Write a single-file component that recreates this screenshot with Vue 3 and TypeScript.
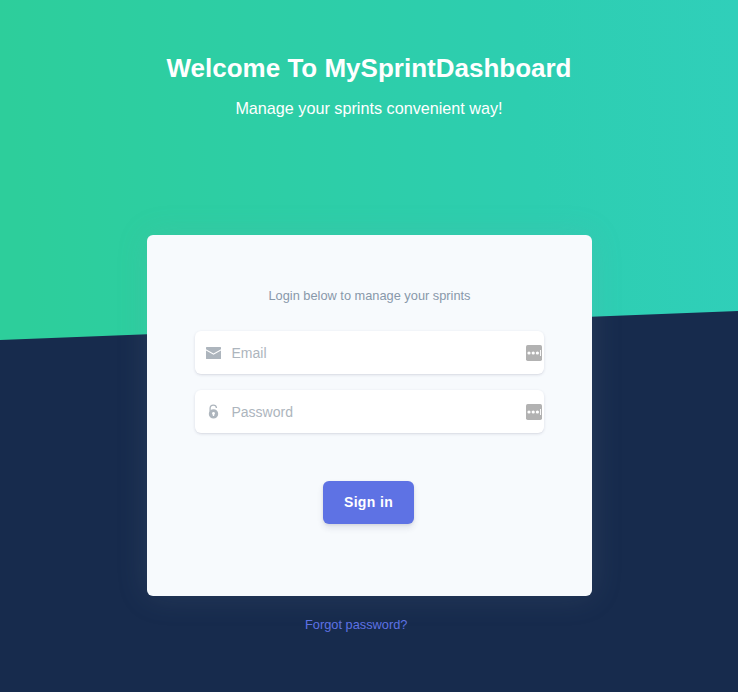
<script setup lang="ts">
import { ref } from 'vue'

const email = ref('')
const password = ref('')
</script>

<template>
  <div class="page">
    <svg class="backdrop" viewBox="0 0 738 342" preserveAspectRatio="none" aria-hidden="true">
      <defs>
        <linearGradient id="hero" x1="0" y1="0.04" x2="1" y2="0">
          <stop offset="0" stop-color="#2dce9b" />
          <stop offset="0.7" stop-color="#2dceb0" />
          <stop offset="1" stop-color="#30cfba" />
        </linearGradient>
      </defs>
      <path d="M0 0H738V311L0 340Z" fill="url(#hero)" />
    </svg>
    <header class="hero">
      <h1>Welcome To MySprintDashboard</h1>
      <p>Manage your sprints convenient way!</p>
    </header>
    <main class="wrap">
      <form class="card" @submit.prevent>
        <p class="hint">Login below to manage your sprints</p>
        <label class="field">
          <svg class="lead" width="15" height="15" viewBox="0 0 15 15">
            <path d="M.5 2H14.5Q15 2 15 2.5V4.3L7.5 8.5L0 4.3V2.5Q0 2 .5 2Z" />
            <path d="M0 5.4L7.5 9.7L15 5.4V13.5Q15 14 14.5 14H.5Q0 14 0 13.5Z" />
          </svg>
          <input v-model="email" type="email" placeholder="Email" />
          <svg class="manager" width="16" height="16" viewBox="0 0 16 16">
            <rect width="16" height="16" rx="1.7" fill="#b2b2b2" />
            <g fill="#fff"><circle cx="3" cy="8" r="1.6" /><circle cx="7.2" cy="8" r="1.6" /><circle cx="11.4" cy="8" r="1.6" /><rect x="14" y="5" width="0.9" height="6" /></g>
          </svg>
        </label>
        <label class="field">
          <svg class="lead" width="15" height="15" viewBox="0 0 15 15">
            <path d="M4.1 7.5V4.2Q4.1 1.2 7.3 1.2Q10.2 1.2 10.5 4" fill="none" stroke="#adb5bd" stroke-width="1.3" />
            <path fill-rule="evenodd" d="M7.5 5.2A4.7 4.7 0 1 1 7.5 14.6A4.7 4.7 0 0 1 7.5 5.2ZM7.5 7.9A1.5 1.5 0 0 0 6.8 10.7V12H8.2V10.7A1.5 1.5 0 0 0 7.5 7.9Z" />
          </svg>
          <input v-model="password" type="password" placeholder="Password" />
          <svg class="manager" width="16" height="16" viewBox="0 0 16 16">
            <rect width="16" height="16" rx="1.7" fill="#b2b2b2" />
            <g fill="#fff"><circle cx="3" cy="8" r="1.6" /><circle cx="7.2" cy="8" r="1.6" /><circle cx="11.4" cy="8" r="1.6" /><rect x="14" y="5" width="0.9" height="6" /></g>
          </svg>
        </label>
        <button type="submit">Sign in</button>
      </form>
      <a class="forgot" href="#">Forgot password?</a>
    </main>
  </div>
</template>

<style>
body {
  margin: 0;
  background: #172b4d;
}
</style>

<style scoped>
.page {
  position: relative;
  box-sizing: border-box;
  min-height: 692px;
  overflow: hidden;
  background: #172b4d;
  font-family: "Liberation Sans", Arial, sans-serif;
}
.backdrop {
  position: absolute;
  top: 0;
  left: 0;
  width: 100%;
  height: 342px;
}
.hero {
  position: relative;
  box-sizing: border-box;
  height: 235px;
  padding-top: 49px;
  text-align: center;
  color: #fff;
}
h1 {
  margin: 0;
  font-size: 26px;
  line-height: 39px;
  font-weight: 700;
}
.hero p {
  margin: 7px 0 0;
  font-size: 16.2px;
  line-height: 27px;
}
.wrap {
  position: relative;
  width: 445px;
  margin: 0 auto 0 147px;
}
.card {
  box-sizing: border-box;
  display: flex;
  flex-direction: column;
  height: 361px;
  padding: 51px 48px 0;
  border-radius: 6px;
  background: #f7fafd;
  box-shadow: 0 0 32px rgba(136, 152, 170, 0.15);
}
.hint {
  margin: 0 0 25px;
  text-align: center;
  font-size: 12.8px;
  line-height: 20px;
  color: #8898aa;
}
.field {
  box-sizing: border-box;
  display: flex;
  align-items: center;
  height: 43px;
  margin-bottom: 16px;
  padding: 0 2px 0 11px;
  border-radius: 6px;
  background: #fff;
  box-shadow: 0 1px 3px rgba(50, 50, 93, 0.15), 0 1px 0 rgba(0, 0, 0, 0.02);
}
.lead {
  flex: none;
  fill: #adb5bd;
}
.manager {
  flex: none;
}
input {
  flex: 1;
  min-width: 0;
  padding: 0 0 0 10.5px;
  border: 0;
  outline: 0;
  background: transparent;
  font: 14px/20px "Liberation Sans", Arial, sans-serif;
  color: #8898aa;
}
input::placeholder {
  color: #adb5bd;
  opacity: 1;
}
button {
  align-self: center;
  width: 91px;
  height: 43px;
  margin: 32px 2px 0 0;
  padding: 0 0 2px;
  border: 0;
  border-radius: 6px;
  background: #5e72e4;
  box-shadow: 0 4px 6px rgba(50, 50, 93, 0.11), 0 1px 3px rgba(0, 0, 0, 0.08);
  font: 700 14px/20px "Liberation Sans", Arial, sans-serif;
  letter-spacing: 0.35px;
  color: #fff;
}
.forgot {
  display: block;
  width: max-content;
  margin: 19px 0 0 158px;
  font-size: 12.8px;
  line-height: 20px;
  color: #5e72e4;
  text-decoration: none;
}
</style>
